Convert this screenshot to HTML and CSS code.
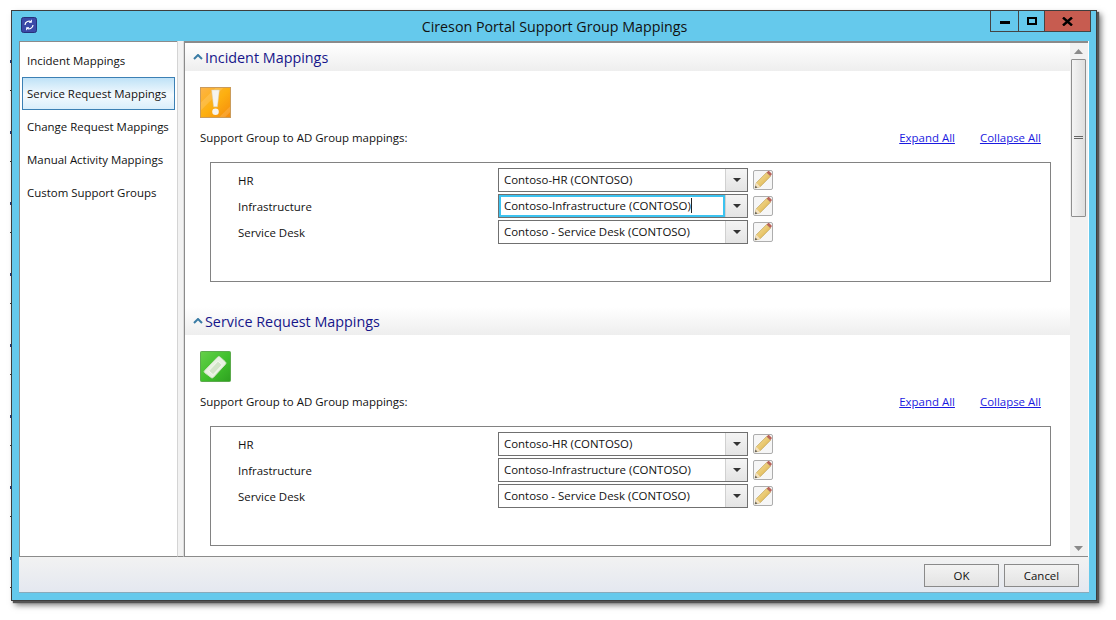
FILE: index.html
```html
<!DOCTYPE html>
<html lang="en">
<head>
<meta charset="utf-8">
<title>Cireson Portal Support Group Mappings</title>
<link rel="stylesheet" href="styles.css">
</head>
<body>
<svg class="defs" width="0" height="0">
  <defs>
    <linearGradient id="pencilBody" x1="0" y1="0" x2="1" y2="1"><stop offset="0" stop-color="#f9e8a8"/><stop offset="1" stop-color="#d9a93a"/></linearGradient>
    <symbol id="pencil" viewBox="0 0 20 20">
      <path d="M2 18l1.300-5.200L13.600 2.500l3.900 3.800L7.200 16.700z" fill="url(#pencilBody)" stroke="#b89a4c" stroke-width=".6"/>
      <path d="M13.600 2.500l1.100-1.100c.6-.5 1.300-.5 1.800 0l1.900 1.900c.5.5.5 1.200 0 1.700l-1.100 1.100z" fill="#b8645a"/>
      <path d="M2 18l1.300-5.200 3.900 3.900z" fill="#f4e2c0"/>
      <path d="M2 18l.6-2.300 1.700 1.700z" fill="#444"/>
    </symbol>
    <symbol id="arrow" viewBox="0 0 8 4"><path d="M0 0h8L4 4z" fill="#333"/></symbol>
  </defs>
</svg>
<div class="speck speck-left"></div>
<div class="speck speck-bottom-a"></div>
<div class="speck speck-bottom-b"></div>
<div class="window">
  <header class="titlebar">
    <svg class="app-icon" viewBox="0 0 16 16" width="16" height="16">
      <rect x=".5" y=".5" width="15" height="15" rx="2" fill="#3b4aa8" stroke="#26307a"/>
      <path d="M4 8a4 4 0 0 1 6.500-3M12 8a4 4 0 0 1-6.500 3" fill="none" stroke="#fff" stroke-width="1.200"/>
      <path d="M10.500 2.800v2.600H8M5.500 13.200v-2.600H8" fill="none" stroke="#dfe6ff" stroke-width="1"/>
    </svg>
    <h1 class="title">Cireson Portal Support Group Mappings</h1>
    <div class="controls">
      <div class="ctl ctl-min"><span class="glyph-min"></span></div>
      <div class="ctl ctl-max"><span class="glyph-max"></span></div>
      <div class="ctl ctl-close">
        <svg viewBox="0 0 11 9" width="11" height="9"><path d="M1 .5l9 8M10 .5l-9 8" stroke="#000" stroke-width="2.400"/></svg>
      </div>
    </div>
  </header>
  <div class="main">
    <nav class="nav">
      <div class="nav-item">Incident Mappings</div>
      <div class="nav-item is-selected">Service Request Mappings</div>
      <div class="nav-item">Change Request Mappings</div>
      <div class="nav-item">Manual Activity Mappings</div>
      <div class="nav-item">Custom Support Groups</div>
    </nav>
    <div class="splitter"></div>
    <div class="pane">
      <div class="scroller">
        <section class="section">
          <div class="section-head">
            <svg class="chev" viewBox="0 0 10 6" width="10" height="6"><path d="M1 5l4-4 4 4" fill="none" stroke="#3a7ca5" stroke-width="2"/></svg>
            <h2 class="section-title">Incident Mappings</h2>
          </div>
          <svg class="big-icon" viewBox="0 0 32 32" width="31" height="31">
            <defs><linearGradient id="org" x1="0" y1="0" x2="1" y2="1"><stop offset="0" stop-color="#fdb44a"/><stop offset=".5" stop-color="#fdb010"/><stop offset="1" stop-color="#f58a0c"/></linearGradient></defs>
            <rect x=".5" y=".5" width="31" height="31" fill="url(#org)" stroke="#c99a5a"/>
            <path d="M1 16L16 1h8L1 24zM31 20L20 31h6l5-5z" fill="#ffffff" opacity=".14"/>
            <path d="M12 3h8l-2 17.500h-4z" fill="#f6f4ee" stroke="#d8cdb0" stroke-width=".5"/>
            <circle cx="16" cy="25.500" r="3.400" fill="#f6f4ee"/>
          </svg>
          <div class="sub-row">
            <span class="sub-label">Support Group to AD Group mappings:</span>
            <a class="link link-expand" href="#">Expand All</a>
            <a class="link" href="#">Collapse All</a>
          </div>
          <div class="box">
            <div class="map-row">
              <span class="map-label">HR</span>
              <div class="combo"><span class="combo-text">Contoso-HR (CONTOSO)</span><span class="combo-btn"><svg width="8" height="4"><use href="#arrow"/></svg></span></div>
              <button class="edit" type="button"><svg width="20" height="20"><use href="#pencil"/></svg></button>
            </div>
            <div class="map-row">
              <span class="map-label">Infrastructure</span>
              <div class="combo is-focus"><span class="combo-text">Contoso-Infrastructure (CONTOSO)<i class="caret"></i></span><span class="combo-btn"><svg width="8" height="4"><use href="#arrow"/></svg></span></div>
              <button class="edit" type="button"><svg width="20" height="20"><use href="#pencil"/></svg></button>
            </div>
            <div class="map-row">
              <span class="map-label">Service Desk</span>
              <div class="combo"><span class="combo-text">Contoso - Service Desk (CONTOSO)</span><span class="combo-btn"><svg width="8" height="4"><use href="#arrow"/></svg></span></div>
              <button class="edit" type="button"><svg width="20" height="20"><use href="#pencil"/></svg></button>
            </div>
          </div>
        </section>
        <section class="section">
          <div class="section-head">
            <svg class="chev" viewBox="0 0 10 6" width="10" height="6"><path d="M1 5l4-4 4 4" fill="none" stroke="#3a7ca5" stroke-width="2"/></svg>
            <h2 class="section-title">Service Request Mappings</h2>
          </div>
          <svg class="big-icon" viewBox="0 0 32 32" width="31" height="31">
            <defs><linearGradient id="grn" x1="0" y1="0" x2="1" y2="1"><stop offset="0" stop-color="#66d04a"/><stop offset=".55" stop-color="#3fbf2c"/><stop offset="1" stop-color="#2ea020"/></linearGradient></defs>
            <rect x=".5" y=".5" width="31" height="31" rx="1" fill="url(#grn)" stroke="#5aa84a"/>
            <path d="M5 20L18 6.500c1-1 2-1 3 0l5 4.500c1 1 1 2 0 3L14 27c-1 1-2 1-3 0l-6-4.500c-1-.8-1-1.600 0-2.500z" fill="#e9f1e2" stroke="#cfe0c4"/>
            <path d="M9 20.500L18.500 10.500l4.500 3.800L13.500 24.500z" fill="#d3e4c9" stroke="#f4f8f0"/>
          </svg>
          <div class="sub-row">
            <span class="sub-label">Support Group to AD Group mappings:</span>
            <a class="link link-expand" href="#">Expand All</a>
            <a class="link" href="#">Collapse All</a>
          </div>
          <div class="box">
            <div class="map-row">
              <span class="map-label">HR</span>
              <div class="combo"><span class="combo-text">Contoso-HR (CONTOSO)</span><span class="combo-btn"><svg width="8" height="4"><use href="#arrow"/></svg></span></div>
              <button class="edit" type="button"><svg width="20" height="20"><use href="#pencil"/></svg></button>
            </div>
            <div class="map-row">
              <span class="map-label">Infrastructure</span>
              <div class="combo"><span class="combo-text">Contoso-Infrastructure (CONTOSO)</span><span class="combo-btn"><svg width="8" height="4"><use href="#arrow"/></svg></span></div>
              <button class="edit" type="button"><svg width="20" height="20"><use href="#pencil"/></svg></button>
            </div>
            <div class="map-row">
              <span class="map-label">Service Desk</span>
              <div class="combo"><span class="combo-text">Contoso - Service Desk (CONTOSO)</span><span class="combo-btn"><svg width="8" height="4"><use href="#arrow"/></svg></span></div>
              <button class="edit" type="button"><svg width="20" height="20"><use href="#pencil"/></svg></button>
            </div>
          </div>
        </section>
      </div>
      <div class="scrollbar">
        <svg class="sb-arrow" viewBox="0 0 9 5" width="9" height="5"><path d="M4.500 0L9 5H0z" fill="#8a8a8a"/></svg>
        <div class="sb-thumb"><span class="sb-grip"></span></div>
        <div class="sb-track"></div>
        <svg class="sb-arrow" viewBox="0 0 9 5" width="9" height="5"><path d="M0 0h9L4.500 5z" fill="#8a8a8a"/></svg>
      </div>
    </div>
  </div>
  <footer class="footer">
    <button class="btn" type="button">OK</button>
    <button class="btn" type="button">Cancel</button>
  </footer>
</div>
</body>
</html>
```
FILE: styles.css
```css
* { box-sizing: border-box; }
html, body { margin: 0; height: 100%; background: #fff; overflow: hidden; }
body {
  padding: 10px 0 0 11px;
  font-family: "Open Sans", "Noto Sans", sans-serif;
  font-size: 11.450px;
  color: #111;
}
.defs { position: absolute; }
.speck { position: absolute; height: 1px; background: repeating-linear-gradient(90deg, #222 0 3px, #fff 3px 5px, #555 5px 7px, #ddd 7px 8px); }
.speck-bottom-a { left: 15px; top: 601px; width: 46px; }
.speck-bottom-b { left: 246px; top: 601px; width: 214px; }
.speck-left { left: 10px; top: 20px; width: 1px; height: 580px; background: repeating-linear-gradient(180deg, #fff 0 40px, #223a80 40px 43px, #fff 43px 70px, #333 70px 71px); }
.window {
  position: relative;
  width: 1086px;
  height: 591px;
  border: 1px solid #3d3d3d;
  background: #65c9ec;
  box-shadow: 2px 2px 1px #555, 4px 4px 6px rgba(0, 0, 0, .55);
  display: flex;
  flex-direction: column;
  padding: 0 7px 7px;
}
.titlebar {
  height: 30px;
  flex: none;
  display: grid;
  grid-template-columns: 1fr auto 1fr;
  align-items: start;
  margin: 0 -7px;
  padding: 0 5px 0 9px;
}
.app-icon { margin-top: 6px; }
.title {
  margin: 6px 0 0;
  padding-right: 3px;
  font-size: 14.250px;
  font-weight: 400;
  line-height: 19px;
  color: #111;
  white-space: nowrap;
}
.controls { justify-self: end; display: flex; height: 21px; border: 1px solid #444; border-top: 0; }
.ctl { display: flex; align-items: center; justify-content: center; height: 100%; }
.ctl-min { width: 28px; border-right: 1px solid #444; }
.ctl-max { width: 26px; border-right: 1px solid #444; }
.ctl-close { width: 45px; background: #c75c50; }
.glyph-min { width: 10px; height: 3px; background: #000; margin-top: 3px; }
.glyph-max { width: 10px; height: 8px; border: 2px solid #000; }
.main { flex: 1; display: flex; min-height: 0; background: #fff; }
.nav {
  width: 158px;
  flex: none;
  background: #fff;
  border-top: 1px solid #8b8b8b;
  border-left: 1px solid #8b8b8b;
  border-bottom: 1px solid #8b8b8b;
  padding: 2px 2px 0;
}
.nav-item {
  height: 33px;
  display: flex;
  align-items: center;
  padding-left: 4px;
  white-space: nowrap;
  border: 1px solid transparent;
}
.is-selected {
  border-color: #3c80b4;
  background: linear-gradient(#bfe2f7 0, #f4fafe 55%, #d9eefb 100%);
}
.splitter { width: 7px; flex: none; background: #f2f2f2; border-left: 1px solid #d4d4d4; border-right: 1px solid #dcdcdc; border-bottom: 1px solid #8b8b8b; }
.pane {
  flex: 1;
  min-width: 0;
  display: flex;
  border: 1px solid #8b8b8b;
  border-right: 0;
  border-top-width: 2px;
  margin-right: 1px;
}
.scroller { flex: 1; min-width: 0; overflow: hidden; background: #fff; }
.section { height: 264px; }
.section-head {
  height: 28px;
  display: flex;
  align-items: center;
  background: linear-gradient(#fff, #eeeeee);
  padding-left: 8px;
}
.chev { margin-right: 2px; margin-top: -1px; }
.section-title {
  margin: 0;
  font-size: 14.350px;
  font-weight: 400;
  color: #16168a;
  white-space: nowrap;
}
.big-icon { display: block; margin: 16px 0 0 15px; }
.sub-row { display: flex; align-items: center; height: 20px; margin: 9px 29px 0 15px; }
.sub-label { margin-right: auto; }
.link { color: #1a1ae0; text-decoration: underline; }
.link-expand { margin-right: 25px; }
.box {
  margin: 15px 19px 0 25px;
  height: 120px;
  border: 1px solid #828282;
  padding-top: 5px;
}
.map-row { display: flex; align-items: center; height: 24px; margin-bottom: 2px; padding-left: 27px; }
.map-label { width: 260px; flex: none; }
.combo {
  width: 250px;
  height: 24px;
  flex: none;
  display: flex;
  border: 1px solid #707070;
  background: #fff;
}
.combo-text { flex: 1; min-width: 0; padding: 1px 0 0 5px; line-height: 20px; white-space: nowrap; }
.combo-btn { width: 22px; flex: none; display: flex; align-items: center; justify-content: center; background: linear-gradient(#f4f4f4, #e4e4e4); border-left: 1px solid #d0d0d0; }
.is-focus .combo-text { outline: 2px solid #3cc3f0; outline-offset: -2px; }
.caret { display: inline-block; width: 1px; height: 15px; background: #222; vertical-align: -3px; }
.edit {
  width: 20px;
  height: 20px;
  flex: none;
  margin-left: 5px;
  padding: 0;
  border: 1px solid #adadad;
  border-radius: 2px;
  background: #f6f6f6;
  display: flex;
  align-items: center;
  justify-content: center;
}
.edit svg { flex: none; }
.scrollbar {
  width: 18px;
  flex: none;
  background: #f1f1f1;
  display: flex;
  flex-direction: column;
  align-items: center;
  padding: 6px 1px 5px 0;
}
.sb-arrow { flex: none; }
.sb-thumb {
  width: 15px;
  height: 158px;
  margin-top: 5px;
  flex: none;
  border: 1px solid #8e8e8e;
  border-radius: 1px;
  background: linear-gradient(90deg, #f4f4f4, #dedede);
  display: flex;
  justify-content: center;
  padding-top: 76px;
}
.sb-grip { width: 9px; height: 3px; border-top: 1px solid #666; border-bottom: 1px solid #666; }
.sb-track { flex: 1; }
.footer {
  height: 36px;
  flex: none;
  display: flex;
  justify-content: flex-end;
  align-items: flex-start;
  gap: 5px;
  padding: 7px 10px 0 0;
  background: linear-gradient(#f2f2f2, #e4e8f0);
  border-bottom: 1px solid #8ab;
}
.btn {
  width: 75px;
  height: 23px;
  padding: 0;
  font: inherit;
  color: #111;
  border: 1px solid #8a8a8a;
  background: linear-gradient(#f3f3f3, #e3e3e3);
}
```
